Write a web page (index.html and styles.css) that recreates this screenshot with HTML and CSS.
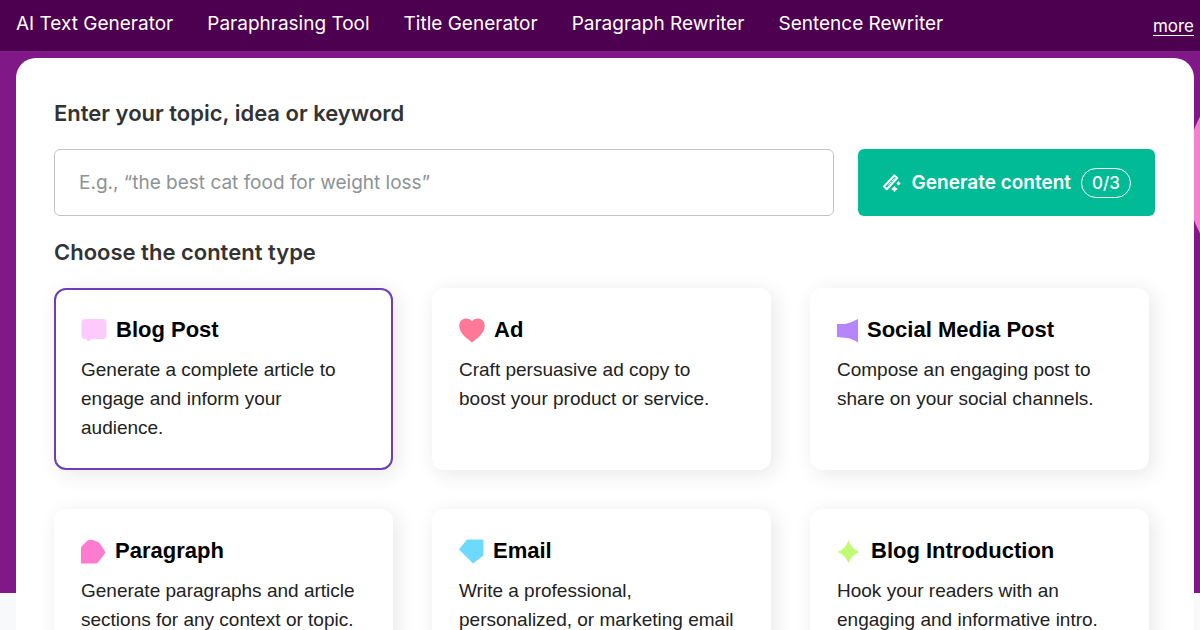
FILE: index.html
```html
<!DOCTYPE html>
<html lang="en">
<head>
	<meta charset="UTF-8">
	<meta name="viewport" content="width=device-width, initial-scale=1">
	<title>AI Content Generator</title>
	<link rel="stylesheet" href="styles.css">
</head>
<body>
	<nav class="nav">
		<a href="#">AI Text Generator</a>
		<a href="#">Paraphrasing Tool</a>
		<a href="#">Title Generator</a>
		<a href="#">Paragraph Rewriter</a>
		<a href="#">Sentence Rewriter</a>
		<a class="more" href="#">more</a>
	</nav>
	<main class="hero">
		<form class="panel">
			<label class="heading" for="topic">Enter your topic, idea or keyword</label>
			<div class="topic">
				<input id="topic" class="topic-input" type="text" placeholder="E.g., “the best cat food for weight loss”">
				<button class="generate" type="button">
					<svg width="20" height="20" viewBox="0 0 20 20">
						<path d="M2 13.500 12.400 2.400 15.200 5 4.800 16.200Z" fill="none" stroke="#fff" stroke-width="2" stroke-linejoin="round"/>
						<path d="M6.500 11.700 12.500 5.400" stroke="#fff" stroke-width="1" stroke-dasharray="4 1"/>
						<path d="M16.500 8.200 18.700 10.400 16.500 12.600 14.300 10.400Z" fill="#fff"/>
						<path d="M12.500 13.300 13.300 15.200 15.200 16 13.300 16.800 12.500 18.700 11.700 16.800 9.800 16 11.700 15.200Z" fill="#fff" stroke="#fff"/>
					</svg>
					<span>Generate content</span>
					<span class="count">0/3</span>
				</button>
			</div>
			<h2 class="heading" id="type">Choose the content type</h2>
			<div class="cards" role="radiogroup" aria-labelledby="type">
				<label class="card">
					<input type="radio" name="type" checked>
					<span class="card-title">
						<svg width="26" height="26" viewBox="0 0 26 26"><path d="M4 2H22Q25.500 2 25.500 5.500V18.500Q25.500 22 22 22H11L7 24.500 5.500 22H4Q.5 22 .5 18.500V5.500Q.5 2 4 2Z" fill="#fccbfb"/></svg>
						Blog Post
					</span>
					<span class="card-text">Generate a complete article to engage and inform your audience.</span>
				</label>
				<label class="card">
					<input type="radio" name="type">
					<span class="card-title">
						<svg width="26" height="26" viewBox="0 0 26 26"><path d="M13 25.500C10 23 4 19 1.500 14C-1 9 0 2 7 1.500Q11 1.500 13 4.500Q15 1.500 19 1.500C26 2 27 9 24.500 14C22 19 16 23 13 25.500Z" fill="#ff7896"/></svg>
						Ad
					</span>
					<span class="card-text">Craft persuasive ad copy to boost your product or service.</span>
				</label>
				<label class="card">
					<input type="radio" name="type">
					<span class="card-title">
						<svg width="21" height="26" viewBox="0 0 21 26"><path d="M0 7H8Q15 5.500 21 2V25.500Q15 21.500 10 21L0 20Z" fill="#b785fb"/></svg>
						Social Media Post
					</span>
					<span class="card-text">Compose an engaging post to share on your social channels.</span>
				</label>
				<label class="card">
					<input type="radio" name="type">
					<span class="card-title">
						<svg width="25" height="26" viewBox="0 0 25 26"><path d="M0 25.500V9L6 3Q9 1 12 2L18 4.500Q21 8 24.500 14.500Q21 20 16 25.500Z" fill="#fe7bd0"/></svg>
						Paragraph
					</span>
					<span class="card-text">Generate paragraphs and article sections for any context or topic.</span>
				</label>
				<label class="card">
					<input type="radio" name="type">
					<span class="card-title">
						<svg width="25" height="26" viewBox="0 0 25 26"><path d="M8 1.500H24.500V17.500L14 25.500 0 11.500Z" fill="#6edafb"/></svg>
						Email
					</span>
					<span class="card-text">Write a professional, personalized, or marketing email</span>
				</label>
				<label class="card">
					<input type="radio" name="type">
					<span class="card-title">
						<svg width="25" height="26" viewBox="0 0 25 26"><path d="M11.500 2.500Q14.500 11 22.500 14Q14.500 17 11.500 25Q8.500 17 .5 14Q8.500 11 11.500 2.500Z" fill="#c1fb72"/></svg>
						Blog Introduction
					</span>
					<span class="card-text">Hook your readers with an engaging and informative intro.</span>
				</label>
			</div>
		</form>
	</main>
</body>
</html>
```
FILE: styles.css
```css
* {
	box-sizing: border-box;
}
body {
	margin: 0;
	background: #f7f9fb;
	font-family: Inter, sans-serif;
}
.nav {
	display: flex;
	align-items: center;
	gap: 34px;
	padding: 10px 6px 13px 16px;
	background: #4d004f;
}
.nav a {
	color: #fff;
	font-size: 19px;
	line-height: 28px;
	text-decoration: none;
	white-space: nowrap;
}
.nav .more {
	margin: 5px 0 0 auto;
	border-bottom: 1px solid #fff;
	font-size: 17px;
	line-height: 18px;
}

/* purple band with the pink disc on the right edge */
.hero {
	padding: 7px 6px 0 16px;
	background: radial-gradient(circle at calc(100% + 110px) 124px, #f480ce 124px, transparent 125px) no-repeat 0 0 / 100% 542px, linear-gradient(#811887, #811887) no-repeat 0 0 / 100% 542px;
}
.panel {
	padding: 39px 39px 39px 38px;
	background: #fff;
	border-radius: 20px;
}
.heading {
	display: block;
	margin: 0;
	color: #333;
	font-size: 22px;
	font-weight: 600;
	line-height: 32px;
}
.topic {
	display: flex;
	gap: 24px;
	margin: 20px 0;
}
.topic-input {
	flex: 1;
	min-width: 0;
	height: 67px;
	padding: 0 24px;
	border: 1px solid #c4c4c8;
	border-radius: 6px;
	color: #333;
	font-family: inherit;
	font-size: 19px;
}
.topic-input::placeholder {
	color: #8d9297;
}
.generate {
	display: flex;
	align-items: center;
	gap: 10px;
	padding: 0 24px;
	border: 0;
	border-radius: 6px;
	background: #00bb96;
	color: #fff;
	font-family: inherit;
	font-size: 19px;
	font-weight: 600;
	white-space: nowrap;
}
.count {
	padding: 0 10px;
	border: 1px solid #fff;
	border-radius: 15px;
	font-size: 17px;
	font-weight: 500;
	line-height: 28px;
}
.cards {
	display: grid;
	grid-template-columns: repeat(3, 1fr);
	grid-auto-rows: 1fr;
	gap: 39px;
	margin: 20px 6px 0 0;
}
.card {
	display: flex;
	flex-direction: column;
	gap: 11px;
	position: relative;
	padding: 25px 32px 26px 25px;
	border: 2px solid transparent;
	border-radius: 12px;
	background: #fff;
	box-shadow: 4px 4px 20px rgba(30, 30, 60, .1);
	color: #222;
	font-family: "Liberation Sans", Arial, sans-serif;
	cursor: pointer;
}
.card:has(input:checked) {
	border-color: #6f3db5;
}
.card input {
	position: absolute;
	margin: 0;
	opacity: 0;
}
.card-title {
	display: flex;
	align-items: center;
	gap: 9px;
	color: #000;
	font-size: 22px;
	font-weight: 700;
	line-height: 29px;
}
.card-text {
	font-size: 19px;
	line-height: 29px;
}
```
